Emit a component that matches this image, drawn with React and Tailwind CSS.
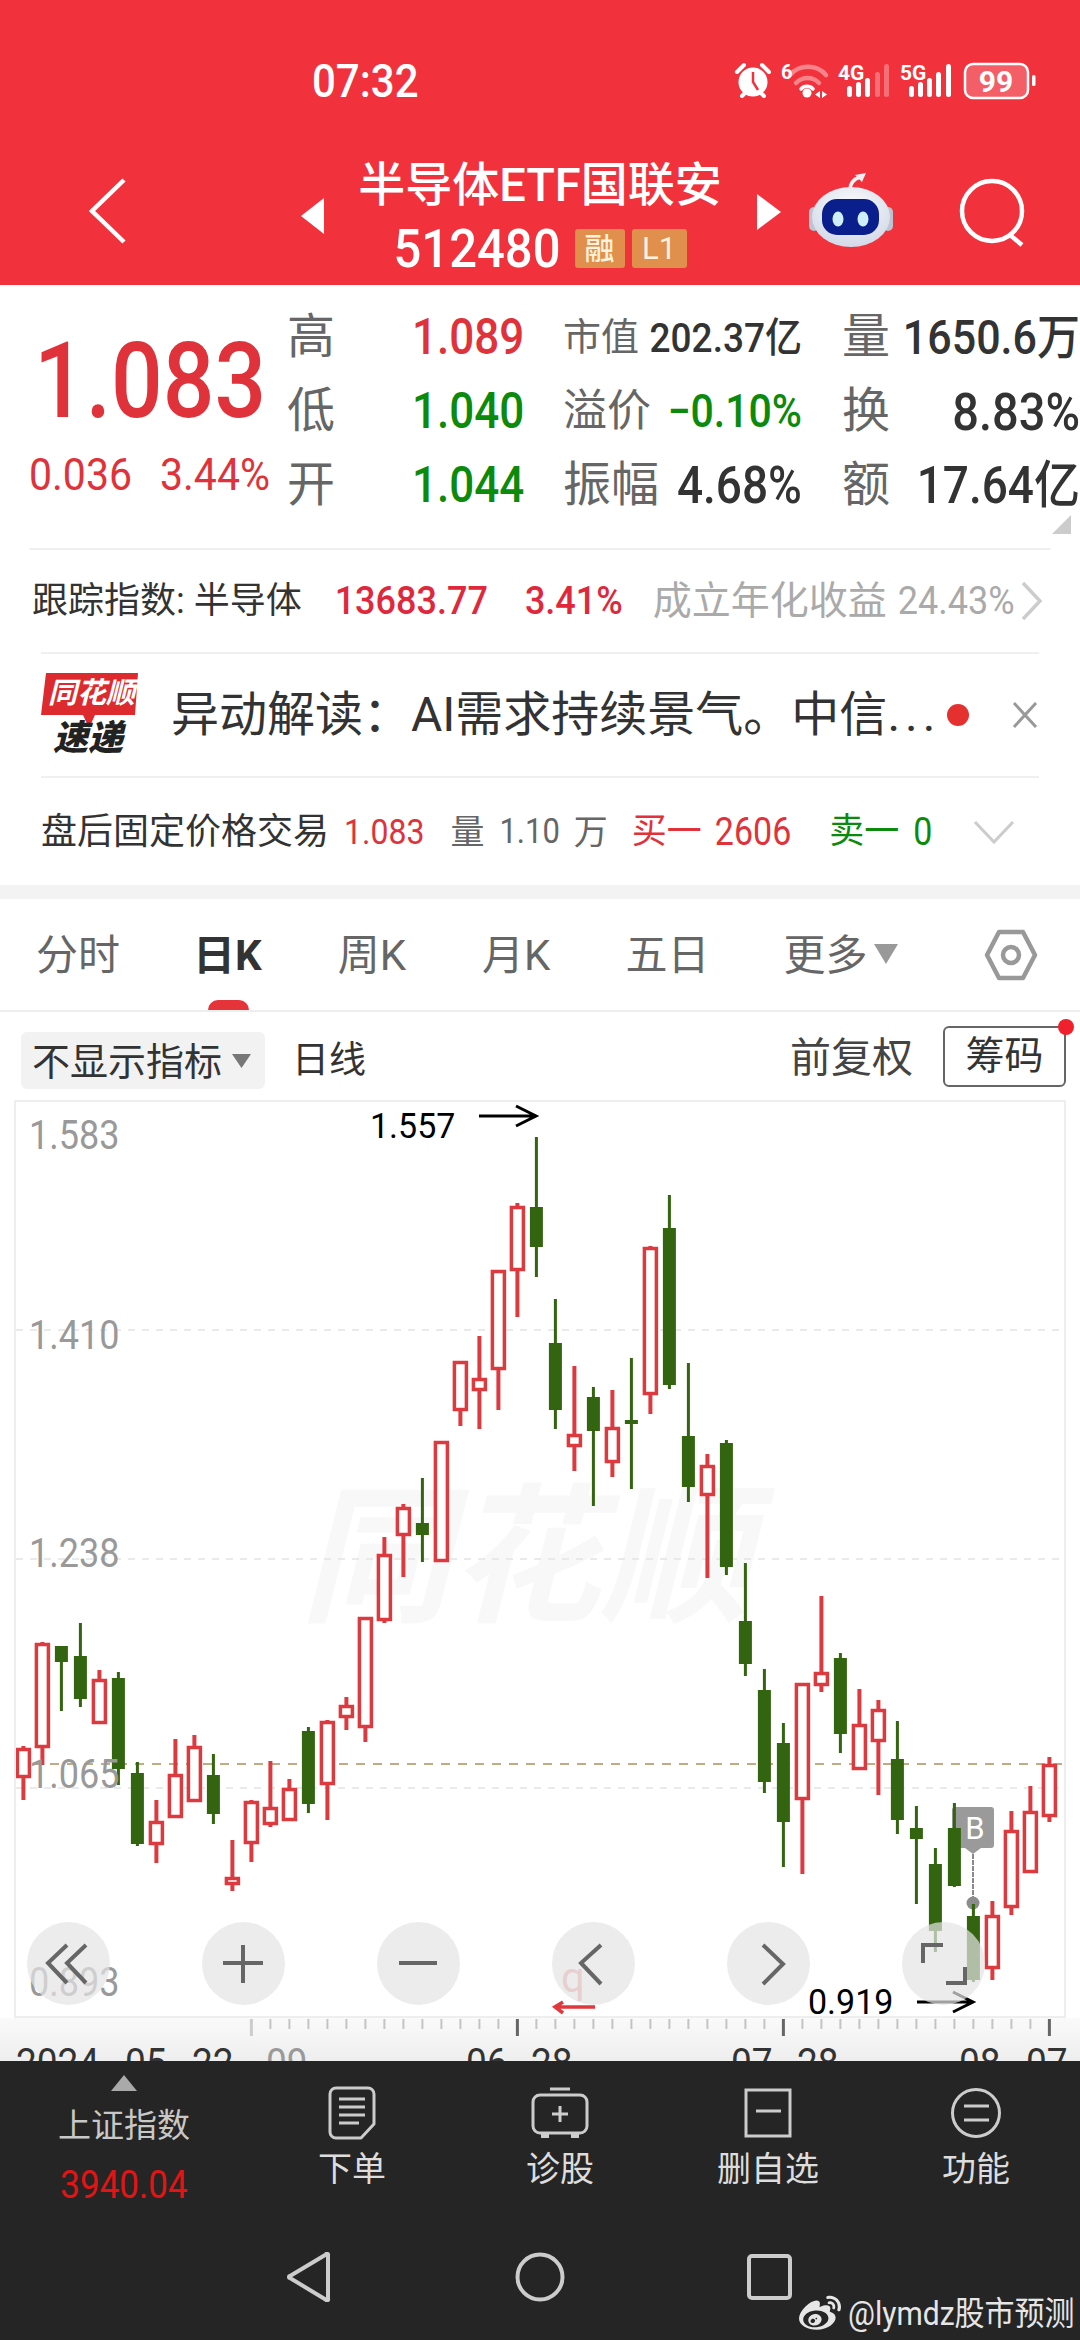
import React from "react";
import { FaWeibo } from "react-icons/fa";

// [type, wickTop, bodyTop, bodyBottom, wickBottom]; r = hollow red, g = solid green
const CANDLES = [
  ["r",1746,1748,1778,1800],["r",1642,1643,1748,1765],["g",1646,1646,1662,1711],["g",1623,1656,1699,1707],
  ["r",1670,1679,1724,1724],["g",1672,1678,1769,1785],["g",1762,1773,1844,1846],["r",1800,1821,1845,1863],
  ["r",1739,1774,1818,1818],["r",1735,1746,1802,1802],["g",1754,1775,1814,1824],["r",1840,1877,1885,1891],
  ["r",1800,1801,1844,1862],["r",1761,1807,1825,1827],["r",1779,1788,1821,1821],["g",1727,1731,1804,1813],
  ["r",1720,1721,1785,1820],["r",1697,1705,1718,1730],["r",1617,1617,1728,1742],["r",1537,1554,1621,1623],
  ["r",1504,1507,1536,1577],["g",1478,1523,1535,1562],["r",1441,1441,1562,1562],["r",1361,1361,1411,1426],
  ["r",1336,1378,1391,1429],["r",1270,1270,1370,1410],["r",1203,1206,1271,1317],["g",1137,1207,1247,1277],
  ["g",1299,1343,1410,1429],["r",1366,1434,1447,1471],["g",1387,1397,1431,1506],["r",1390,1427,1463,1477],
  ["g",1358,1420,1424,1489],["r",1246,1247,1395,1414],["g",1195,1228,1385,1389],["g",1363,1436,1487,1502],
  ["r",1454,1465,1496,1578],["g",1440,1443,1567,1575],["g",1563,1621,1664,1676],["g",1669,1690,1782,1793],
  ["g",1723,1743,1822,1867],["r",1683,1683,1800,1874],["r",1596,1672,1686,1692],["g",1653,1658,1734,1753],
  ["r",1689,1724,1770,1770],["r",1700,1709,1742,1795],["g",1721,1759,1820,1834],["g",1806,1828,1839,1904],
  ["g",1848,1864,1931,1952],["g",1803,1828,1886,1887],["g",1904,1916,1980,1982],["r",1901,1915,1969,1980],
  ["r",1811,1830,1908,1915],["r",1786,1811,1873,1873],["r",1757,1764,1817,1822],
];
const cx = (i) => 23.4 + i * 19;

function Candles() {
  return (
    <svg className="absolute left-[-2px] top-[-2px]" width="1052" height="918" viewBox="14 1100 1052 918">
      <g stroke="#e3e3e3" strokeWidth="1.5" strokeDasharray="7 7">
        <line x1="16" x2="1064" y1="1330" y2="1330" />
        <line x1="16" x2="1064" y1="1559" y2="1559" />
        <line x1="16" x2="1064" y1="1788" y2="1788" />
      </g>
      <line x1="16" x2="1064" y1="1764" y2="1764" stroke="#c2aa84" strokeWidth="2" strokeDasharray="9 8" />
      {/* B marker */}
      <path d="M959 1807h32a3 3 0 0 1 3 3v35a3 3 0 0 1-3 3h-10l-8 6-8-6h-10a3 3 0 0 1-3-3v-35a3 3 0 0 1 3-3z" fill="#9a9a9a" />
      <text x="975" y="1839" textAnchor="middle" fontSize="31" fontFamily="Roboto" fill="#fff">B</text>
      <line x1="973" x2="973" y1="1854" y2="1900" stroke="#8a8a8a" strokeWidth="2" strokeDasharray="5 1" />
      <circle cx="973" cy="1903" r="6.5" fill="#8c8c8c" />
      {CANDLES.map(([t, wt, bt, bb, wb], i) => {
        const x = cx(i);
        if (t === "g") {
          return (
            <g key={i} fill="#33640f">
              <rect x={x - 1.5} y={wt} width="3" height={wb - wt} />
              <rect x={x - 6.5} y={bt} width="13" height={Math.max(bb - bt, 3)} />
            </g>
          );
        }
        return (
          <g key={i}>
            <rect x={x - 2} y={wt} width="4" height={wb - wt} fill="#dd3a40" />
            <rect x={x - 6} y={bt + 1.5} width="12" height={bb - bt - 3} fill="#fff" stroke="#dd3a40" strokeWidth="3.5" />
          </g>
        );
      })}
      {/* hand-drawn annotations */}
      <g fill="none" stroke="#000" strokeWidth="3">
        <path d="M479 1116h57M516 1106l20 10-20 10" />
        <path d="M917 2002h56M953 1992l20 10-20 10" />
      </g>
      <path d="M595 2007h-40M563 2002l-8 5 8 6" fill="none" stroke="#e0383c" strokeWidth="3.5" />
    </svg>
  );
}

function RoundBtn({ className, children }) {
  return (
    <div className={"absolute top-[820px] w-[83px] h-[83px] rounded-full bg-[#e4e4e4]/70 " + className}>
      <svg width="83" height="83" viewBox="0 0 83 83" fill="none" stroke="#666" strokeWidth="4">{children}</svg>
    </div>
  );
}

function Chart() {
  const label = "absolute left-[13px] text-[36px] leading-none text-[#999] scale-y-[1.12]";
  return (
    <div className="relative ml-[14px] w-[1052px] h-[918px] border-2 border-[#eee] overflow-hidden shrink-0">
      <span className="absolute left-[284px] top-[382px] text-[150px] leading-none font-bold italic text-[#f8f8f8] whitespace-nowrap">同花顺</span>
      <Candles />
      <span className={label + " top-[16px]"}>1.583</span>
      <span className={label + " top-[216px]"}>1.410</span>
      <span className={label + " top-[434px]"}>1.238</span>
      <span className={label + " top-[655px]"}>1.065</span>
      <span className={label + " top-[863px]"}>0.893</span>
      <span className="absolute left-[354px] top-[6px] text-[34px] leading-none text-black scale-y-[1.05]">1.557</span>
      <span className="absolute left-[792px] top-[882px] text-[34px] leading-none text-black scale-y-[1.05]">0.919</span>
      <span className="absolute left-[545px] top-[855px] text-[42px] leading-none text-[#e0383c]/50">q</span>
      <RoundBtn className="left-[11px]">
        <path d="M40 23 21 41l19 20M59 23 40 41l19 20" />
      </RoundBtn>
      <RoundBtn className="left-[186px]">
        <path d="M21 41h40M41 23v38" />
      </RoundBtn>
      <RoundBtn className="left-[361px]">
        <path d="M22 41h38" />
      </RoundBtn>
      <RoundBtn className="left-[536px]">
        <path d="M49 23 29 41l20 21" />
      </RoundBtn>
      <RoundBtn className="left-[711px]">
        <path d="M36 23l20 19-20 20" />
      </RoundBtn>
      <RoundBtn className="left-[886px]">
        <path d="M21 41V23h20M44 61h19V45" />
      </RoundBtn>
    </div>
  );
}

function TimeAxis() {
  const date = "absolute top-[27px] text-[37px] leading-none text-[#333] scale-y-[1.1]";
  const ticks = [];
  for (let i = 12; i <= 54; i++) ticks.push(i);
  return (
    <div className="relative h-[43px] overflow-hidden bg-gradient-to-b from-[#fafafa] to-[#eeeeee] shrink-0">
      <svg className="absolute left-0 top-0" width="1080" height="20">
        {ticks.map((i) => {
          const major = (i - 12) % 14 === 0;
          return (
            <rect
              key={i}
              x={cx(i) - (major ? 1.5 : 1)}
              y="1"
              width={major ? 3 : 2}
              height={major ? 17 : 10}
              fill={i === 12 ? "#ccc" : major ? "#666" : "#c4c4c4"}
            />
          );
        })}
      </svg>
      <span className={date + " left-[16px]"}>2024</span>
      <span className={date + " left-[125px]"}>05</span>
      <span className={date + " left-[192px]"}>22</span>
      <span className={date + " left-[266px] text-[#999]"}>09</span>
      <span className={date + " left-[466px]"}>06</span>
      <span className={date + " left-[531px]"}>28</span>
      <span className={date + " left-[731px]"}>07</span>
      <span className={date + " left-[797px]"}>28</span>
      <span className={date + " left-[959px]"}>08</span>
      <span className={date + " left-[1026px]"}>07</span>
    </div>
  );
}

function StatusIcons() {
  const bars = (xs, dimFrom) =>
    xs.map((x, i) => {
      const h = [11, 15, 19, 25, 33][i];
      return <rect key={x} x={x} y={97 - h} width="5" height={h} rx="2.5" fill="#fff" opacity={i >= dimFrom ? 0.3 : 1} />;
    });
  return (
    <svg width="310" height="50" viewBox="730 56 310 50" className="ml-auto mr-[40px]">
      {/* alarm */}
      <circle cx="753" cy="82" r="14.5" fill="#fff" />
      <path d="M753 72v10l5 8" fill="none" stroke="#f1323d" strokeWidth="2.5" />
      <path d="M737 72l7-7M769 72l-7-7M742 96l4-4M764 96l-4-4" stroke="#fff" strokeWidth="4" strokeLinecap="round" />
      {/* wifi */}
      <text x="781" y="79" fontSize="20" fontWeight="700" fontFamily="Roboto" fill="#fff">6</text>
      <path d="M790 75a24 24 0 0 1 36 0" fill="none" stroke="#fff" strokeOpacity="0.4" strokeWidth="4.5" strokeLinecap="round" />
      <path d="M796 83a16 16 0 0 1 23 0" fill="none" stroke="#fff" strokeOpacity="0.4" strokeWidth="4.5" strokeLinecap="round" />
      <path d="M801 89a8 8 0 0 1 12 0" fill="none" stroke="#fff" strokeWidth="3.5" strokeLinecap="round" />
      <circle cx="807" cy="93" r="4.5" fill="#fff" />
      <path d="M820 91v7l-5-3.5zM822 91v7l5-3.5z" fill="#fff" />
      {/* 4G */}
      <text x="838" y="80" fontSize="21" fontWeight="700" fontFamily="Roboto" fill="#fff">4G</text>
      {bars([847, 856, 865, 875, 884], 3)}
      {/* 5G */}
      <text x="900" y="80" fontSize="21" fontWeight="700" fontFamily="Roboto" fill="#fff">5G</text>
      {bars([909, 918, 927, 936, 946], 9)}
      {/* battery */}
      <rect x="965" y="64" width="63" height="34" rx="8" fill="#fff" fillOpacity="0.22" stroke="#fff" strokeWidth="2.5" />
      <rect x="1032" y="75" width="3.5" height="11" rx="1.5" fill="#fff" />
      <text x="996" y="92" textAnchor="middle" fontSize="30" fontWeight="700" fontFamily="Roboto" fill="#fff">99</text>
    </svg>
  );
}

function Robot() {
  return (
    <svg width="84" height="76" viewBox="807 172 84 76" className="ml-[28px] mt-[10px] shrink-0">
      <defs>
        <radialGradient id="head" cx="50%" cy="35%" r="70%">
          <stop offset="0%" stopColor="#ffffff" />
          <stop offset="100%" stopColor="#cfd6e6" />
        </radialGradient>
      </defs>
      <path d="M848 190c0-7 4-11 10-13" fill="none" stroke="#f0f0f4" strokeWidth="3.5" />
      <path d="M853 175l11-2-4 9z" fill="#f0f0f4" />
      <rect x="807" y="207" width="10" height="24" rx="5" fill="#bcc4d2" />
      <rect x="881" y="207" width="10" height="24" rx="5" fill="#bcc4d2" />
      <ellipse cx="849" cy="217" rx="39" ry="30" fill="url(#head)" />
      <rect x="820" y="199" width="57" height="36" rx="15" fill="#0a1e8c" />
      <ellipse cx="836" cy="219" rx="5.5" ry="7.5" fill="#cfeefc" />
      <ellipse cx="861" cy="219" rx="5.5" ry="7.5" fill="#cfeefc" />
    </svg>
  );
}

function Header() {
  return (
    <div className="h-[285px] bg-[#f1323d] flex flex-col shrink-0 text-white">
      <div className="h-[162px] flex items-center">
        <span className="ml-[312px] mt-[2px] text-[42px] leading-none font-medium scale-y-[1.1]">07:32</span>
        <StatusIcons />
      </div>
      <div className="h-[123px] flex items-start">
        <svg width="40" height="68" viewBox="0 0 40 68" className="ml-[88px] mt-[15px] shrink-0" fill="none" stroke="#fff" strokeWidth="4.5">
          <path d="M36 3 4 34l32 31" />
        </svg>
        <svg width="24" height="36" viewBox="0 0 24 36" className="ml-[173px] mt-[36px] shrink-0" fill="#fff">
          <path d="M23 0v36L0 18z" />
        </svg>
        <div className="w-[430px] -mt-[3px] flex flex-col items-center">
          <div className="h-[52px] text-[47px] leading-[52px] font-medium whitespace-nowrap">半导体ETF国联安</div>
          <div className="mt-[18px] h-[39px] flex items-center">
            <span className="text-[49px] leading-none font-medium scale-y-[1.1]">512480</span>
            <span className="ml-[14px] w-[50px] h-[39px] rounded-[3px] bg-[#e0904c] text-[#fff2df] text-[30px] font-medium leading-none flex items-center justify-center">融</span>
            <span className="ml-[7px] w-[55px] h-[39px] rounded-[3px] bg-[#e0904c] text-[#fff2df] text-[31px] leading-none flex items-center justify-center">L1</span>
          </div>
        </div>
        <svg width="24" height="36" viewBox="0 0 24 36" className="ml-[2px] mt-[32px] shrink-0" fill="#fff">
          <path d="M0 0v36l24-18z" />
        </svg>
        <Robot />
        <svg width="70" height="70" viewBox="0 0 70 70" className="ml-[66px] mt-[16px] shrink-0" fill="none" stroke="#fff" strokeWidth="4.5">
          <circle cx="33" cy="33" r="30" />
          <path d="M51 57l12 10" />
        </svg>
      </div>
    </div>
  );
}

function QuoteRow({ a, aColor, b, labelSize, c, cColor, d, dSize, e, f, fSize }) {
  return (
    <div className="h-[74px] flex items-center leading-none">
      <span className="w-[125px] text-[48px] text-[#666]">{a}</span>
      <span className={"w-[151px] text-[44px] font-medium scale-y-[1.12] origin-center " + aColor}>{b}</span>
      <div className="w-[239px] flex items-center justify-between">
        <span className={"text-[#666] " + labelSize}>{c}</span>
        <span className={"font-medium scale-y-[1.12] whitespace-nowrap " + dSize + " " + cColor}>{d}</span>
      </div>
      <div className="ml-[40px] w-[238px] flex items-center justify-between">
        <span className="text-[48px] text-[#666]">{e}</span>
        <span className={"font-medium text-[#333] scale-y-[1.12] whitespace-nowrap " + fSize}>{f}</span>
      </div>
    </div>
  );
}

function Quote() {
  return (
    <div className="relative h-[263px] flex shrink-0">
      <div className="w-[287px] shrink-0 flex flex-col">
        <span className="ml-[34px] mt-[51px] text-[91px] leading-none font-medium text-[#e0323a] scale-y-[1.16]">1.083</span>
        <div className="ml-[29px] mt-[28px] flex text-[#e0323a] leading-none scale-y-[1.1]">
          <span className="text-[41px]">0.036</span>
          <span className="ml-[28px] text-[41px]">3.44%</span>
        </div>
      </div>
      <div className="pt-[15px]">
        <QuoteRow a="高" aColor="text-[#e0323a]" b="1.089" labelSize="text-[38px]" c="市值" cColor="text-[#333]" d="202.37亿" dSize="text-[37px]" e="量" f="1650.6万" fSize="text-[43px]" />
        <QuoteRow a="低" aColor="text-[#0b8a0b]" b="1.040" labelSize="text-[44px]" c="溢价" cColor="text-[#0b8a0b]" d="−0.10%" dSize="text-[41px]" e="换" f="8.83%" fSize="text-[47px]" />
        <QuoteRow a="开" aColor="text-[#0b8a0b]" b="1.044" labelSize="text-[48px]" c="振幅" cColor="text-[#333]" d="4.68%" dSize="text-[46px]" e="额" f="17.64亿" fSize="text-[46px]" />
      </div>
      <svg className="absolute left-[1052px] top-[230px]" width="20" height="20" viewBox="0 0 20 20">
        <path d="M19 0v19H0z" fill="#cccccc" />
      </svg>
    </div>
  );
}

function Logo() {
  return (
    <div className="relative w-[98px] h-[84px] shrink-0">
      <svg className="absolute left-0 top-0" width="98" height="58" viewBox="0 0 98 58">
        <path d="M5 0h92l-3 42H54l-6 13-6-13H0z" fill="#dd2a2e" />
      </svg>
      <span className="absolute left-[7px] top-[6px] text-[29px] leading-none font-bold italic text-white whitespace-nowrap">同花顺</span>
      <span className="absolute left-[12px] top-[48px] text-[35px] leading-none font-black italic text-[#222] whitespace-nowrap">速递</span>
    </div>
  );
}

function InfoRows() {
  return (
    <div className="flex flex-col shrink-0">
      <div className="mx-[29px] h-[104px] border-t-2 border-[#f0f0f0] flex items-center leading-none whitespace-nowrap">
        <span className="ml-[3px] text-[36px] text-[#333]">跟踪指数: 半导体</span>
        <span className="ml-[33px] text-[36px] font-medium text-[#e0283c] scale-y-[1.1]">13683.77</span>
        <span className="ml-[37px] text-[36px] font-medium text-[#e0283c] scale-y-[1.1]">3.41%</span>
        <span className="ml-[30px] text-[39px] text-[#aaa]">成立年化收益</span>
        <span className="ml-[11px] text-[36px] text-[#aaa] scale-y-[1.1]">24.43%</span>
        <svg width="22" height="40" viewBox="0 0 22 40" className="ml-[6px] shrink-0" fill="none" stroke="#ccc" strokeWidth="3.5">
          <path d="M2 2l17 18L2 38" />
        </svg>
      </div>
      <div className="mx-[41px] h-[124px] border-t-2 border-[#f0f0f0] flex items-center">
        <Logo />
        <span className="ml-[32px] w-[762px] text-[48px] leading-none text-[#333] whitespace-nowrap">异动解读：AI需求持续景气。中信<span className="tracking-[5px]">...</span></span>
        <span className="ml-[14px] w-[22px] h-[22px] rounded-full bg-[#e53030] shrink-0"></span>
        <svg width="26" height="26" viewBox="0 0 26 26" className="ml-[43px] shrink-0" fill="none" stroke="#999" strokeWidth="3">
          <path d="M2 1l22 24M24 1 2 25" />
        </svg>
      </div>
      <div className="mx-[41px] h-[109px] border-t-2 border-[#f0f0f0] flex items-center leading-none whitespace-nowrap">
        <span className="text-[36px] text-[#333]">盘后固定价格交易</span>
        <span className="ml-[15px] text-[32px] text-[#e0323a] scale-y-[1.12]">1.083</span>
        <span className="ml-[26px] text-[34px] text-[#666]">量</span>
        <span className="ml-[15px] text-[31px] text-[#666] scale-y-[1.12]">1.10</span>
        <span className="ml-[14px] text-[34px] text-[#666]">万</span>
        <span className="ml-[24px] text-[35px] text-[#e0323a]">买一</span>
        <span className="ml-[13px] text-[34px] text-[#e0323a] scale-y-[1.12]">2606</span>
        <span className="ml-[38px] text-[35px] text-[#0b8a0b]">卖一</span>
        <span className="ml-[14px] text-[34px] text-[#0b8a0b] scale-y-[1.12]">0</span>
        <svg width="42" height="24" viewBox="0 0 42 24" className="ml-[41px] shrink-0" fill="none" stroke="#ccc" strokeWidth="3">
          <path d="M2 2l19 20L40 2" />
        </svg>
      </div>
      <div className="h-[14px] bg-[#f3f3f3]"></div>
    </div>
  );
}

function Tabs() {
  const t = "text-[42px] text-[#666] whitespace-nowrap";
  return (
    <div className="relative h-[113px] border-b-2 border-[#eee] flex items-center leading-none shrink-0">
      <span className={t + " ml-[36px] mt-[2px]"}>分时</span>
      <span className="ml-[73px] mt-[2px] text-[42px] font-bold text-[#333]">日K</span>
      <span className={t + " ml-[76px] mt-[2px]"}>周K</span>
      <span className={t + " ml-[76px] mt-[2px]"}>月K</span>
      <span className={t + " ml-[75px] mt-[2px]"}>五日</span>
      <span className={t + " ml-[74px] mt-[2px]"}>更多</span>
      <svg width="24" height="20" viewBox="0 0 24 20" className="ml-[7px] shrink-0 mb-[2px]">
        <path d="M0 0h24L12 20z" fill="#999" />
      </svg>
      <svg width="54" height="52" viewBox="0 0 54 52" className="ml-[86px] shrink-0" fill="none" stroke="#999" strokeWidth="4.5">
        <path d="M15 3h24l12 23-12 23H15L3 26z" strokeLinejoin="round" />
        <circle cx="27" cy="26" r="8" />
      </svg>
      <div className="absolute left-[208px] top-[101px] w-[41px] h-[10px] rounded-t-full rounded-b-[3px] bg-[#e5333a]"></div>
    </div>
  );
}

function ChartBar() {
  return (
    <div className="h-[88px] flex items-start leading-none shrink-0">
      <div className="ml-[21px] mt-[20px] w-[244px] h-[57px] rounded-[6px] bg-[#f2f2f2] flex items-center pl-[11px]">
        <span className="text-[38px] mt-[2px] text-[#333] whitespace-nowrap">不显示指标</span>
        <svg width="19" height="14" viewBox="0 0 19 14" className="ml-[10px] shrink-0">
          <path d="M0 0h19L9.5 14z" fill="#777" />
        </svg>
      </div>
      <div className="ml-[27px] mt-[20px] h-[57px] flex items-center text-[37px] text-[#333]">日线</div>
      <div className="ml-auto mt-[17px] h-[58px] flex items-center text-[41px] text-[#444] whitespace-nowrap">前复权</div>
      <div className="relative ml-[30px] mr-[14px] mt-[14px] w-[123px] h-[61px] rounded-[6px] border-2 border-[#666] flex items-center justify-center text-[39px] text-[#333]">
        筹码
        <span className="absolute left-[113px] top-[-9px] w-[16px] h-[16px] rounded-full bg-[#f0202c]"></span>
      </div>
    </div>
  );
}

function BottomItem({ label, children }) {
  return (
    <div className="w-[208px] flex flex-col items-center pt-[23px]">
      <div className="h-[58px] flex items-center justify-center">{children}</div>
      <span className="mt-[5px] text-[34px] leading-[44px] text-[#ddd]">{label}</span>
    </div>
  );
}

function BottomBar() {
  return (
    <div className="relative flex-1 bg-[#252525] flex flex-col">
      <div className="h-[175px] flex">
        <div className="w-[248px] flex flex-col items-center">
          <svg width="26" height="16" viewBox="0 0 26 16" className="mt-[14px] shrink-0">
            <path d="M13 0l13 16H0z" fill="#aaa" />
          </svg>
          <span className="mt-[17px] text-[33px] leading-[36px] text-[#c8c8c8]">上证指数</span>
          <span className="mt-[24px] text-[35px] leading-none text-[#e01515] scale-y-[1.1]">3940.04</span>
        </div>
        <BottomItem label="下单">
          <svg width="48" height="54" viewBox="0 0 48 54" fill="none" stroke="#ccc" strokeWidth="3">
            <path d="M8 2h32a6 6 0 0 1 6 6v30L33 52H8a6 6 0 0 1-6-6V8a6 6 0 0 1 6-6z" strokeLinejoin="round" />
            <path d="M11 13h26M11 21h26M11 29h26M11 37h20" />
          </svg>
        </BottomItem>
        <BottomItem label="诊股">
          <svg width="58" height="52" viewBox="0 0 58 52" fill="none" stroke="#ccc" strokeWidth="3">
            <path d="M19 2h20" />
            <rect x="2" y="8" width="54" height="38" rx="7" />
            <path d="M29 19v16M21 27h16" />
            <path d="M10 49h8M40 49h8" strokeWidth="4" />
          </svg>
        </BottomItem>
        <BottomItem label="删自选">
          <svg width="48" height="50" viewBox="0 0 48 50" fill="none" stroke="#ccc" strokeWidth="3">
            <rect x="2" y="2" width="44" height="46" />
            <path d="M12 23h25" />
          </svg>
        </BottomItem>
        <BottomItem label="功能">
          <svg width="52" height="52" viewBox="0 0 52 52" fill="none" stroke="#ccc" strokeWidth="3">
            <circle cx="26" cy="26" r="23.5" />
            <path d="M14 19h25M14 33h25" />
          </svg>
        </BottomItem>
      </div>
      <div className="h-[82px] flex items-center">
        <svg width="44" height="50" viewBox="0 0 44 50" className="ml-[287px] shrink-0" fill="none" stroke="#ccc" strokeWidth="4">
          <path d="M41 3v44a1 1 0 0 1-2 .8L3 26a1 1 0 0 1 0-2L39 2.5A1 1 0 0 1 41 3z" strokeLinejoin="round" />
        </svg>
        <svg width="50" height="50" viewBox="0 0 50 50" className="ml-[184px] shrink-0" fill="none" stroke="#ccc" strokeWidth="4">
          <circle cx="25" cy="25" r="22.5" />
        </svg>
        <svg width="45" height="46" viewBox="0 0 45 46" className="ml-[182px] shrink-0" fill="none" stroke="#ccc" strokeWidth="4">
          <rect x="2" y="2" width="41" height="42" rx="3" />
        </svg>
      </div>
      <div className="absolute left-[799px] top-[232px] flex items-center text-[#e6e6e6] leading-none whitespace-nowrap">
        <FaWeibo size={42} />
        <span className="ml-[7px] text-[30px] scale-y-[1.1]">@lymdz股市预测</span>
      </div>
    </div>
  );
}

export default function App() {
  return (
    <div className="w-[1080px] h-[2340px] overflow-hidden bg-white flex flex-col font-['Roboto','Noto_Sans_CJK_SC',sans-serif]">
      <Header />
      <Quote />
      <InfoRows />
      <Tabs />
      <ChartBar />
      <Chart />
      <TimeAxis />
      <BottomBar />
    </div>
  );
}
